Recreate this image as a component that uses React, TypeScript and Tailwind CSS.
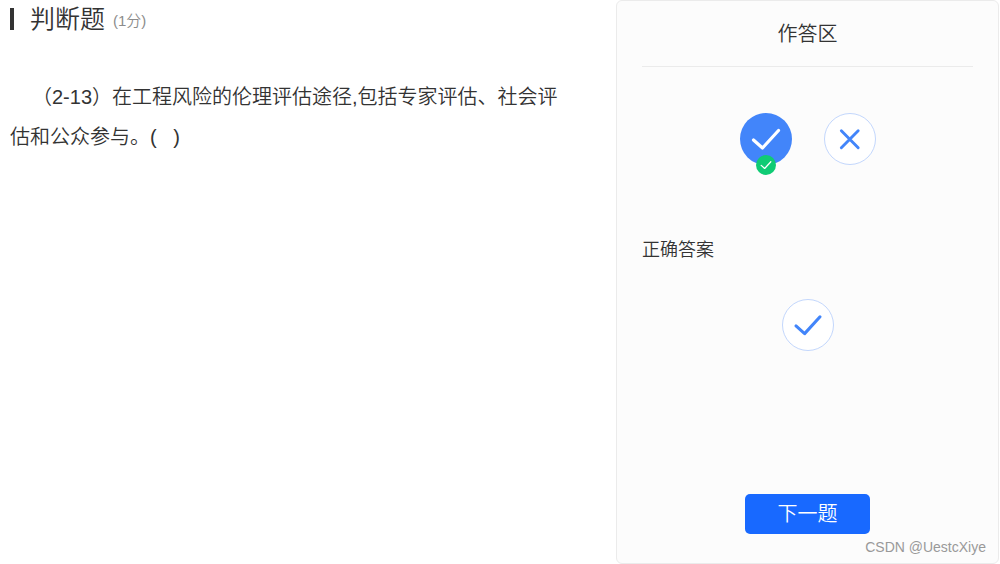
import { useState } from 'react'

const fontStack = "font-['Liberation_Sans','Noto_Sans_CJK_SC',sans-serif]"

function CheckMark({ className }: { className?: string }) {
  return (
    <svg viewBox="0 0 52 52" fill="none" stroke="currentColor" className={className} aria-hidden="true">
      <path d="M13.5 27 L22.5 35 L38.5 17.5" strokeWidth="3.2" strokeLinecap="round" strokeLinejoin="round" />
    </svg>
  )
}

function CrossMark({ className }: { className?: string }) {
  return (
    <svg viewBox="0 0 52 52" fill="none" stroke="currentColor" className={className} aria-hidden="true">
      <path d="M17 17.5 L34.5 35 M34.5 17.5 L17 35" strokeWidth="3" strokeLinecap="round" />
    </svg>
  )
}

const options = [
  { value: 'true', label: '正确', Icon: CheckMark },
  { value: 'false', label: '错误', Icon: CrossMark },
]

const correctAnswer = 'true'

function Question() {
  return (
    <main className="min-w-0 pl-2.5 pr-12 pt-[3px]">
      <h1 className="flex h-8 items-center">
        <span className="mr-4 h-[22px] w-1 bg-[#333333]" />
        <span className="text-[25px] leading-8">判断题</span>
        <span className="ml-2 pt-1 text-[15px] leading-6 text-[#8c8c8c]">(1分)</span>
      </h1>
      <p className="mt-[42px] indent-[22px] text-xl leading-10">
        （2-13）在工程风险的伦理评估途径,包括专家评估、社会评估和公众参与。(&nbsp;&nbsp;&nbsp;)
      </p>
    </main>
  )
}

function AnswerPanel() {
  const [answer, setAnswer] = useState('true')

  return (
    <aside className="relative flex flex-col rounded-md border border-[#ebebeb] bg-[#fcfcfc] px-[25px] pb-[29px]">
      <h2 id="answer-title" className="h-[66px] border-b border-[#ebebeb] text-center text-xl leading-[66px]">
        作答区
      </h2>

      {/* True / false choice */}
      <fieldset aria-labelledby="answer-title" className="mt-[46px] flex justify-center gap-8">
        {options.map(({ value, label, Icon }) => {
          const selected = answer === value
          return (
            <label
              key={value}
              className={`relative size-[52px] cursor-pointer rounded-full ${
                selected ? 'bg-[#4285fa] text-white' : 'border border-[#c3d7fc] bg-white text-[#4285fa]'
              }`}
            >
              <input
                type="radio"
                name="answer"
                value={value}
                checked={selected}
                onChange={() => setAnswer(value)}
                aria-label={label}
                className="absolute inset-0 size-full cursor-pointer opacity-0"
              />
              <Icon className="size-full" />
              {selected && value === correctAnswer && (
                <span className="absolute -bottom-2.5 left-4 size-5 rounded-full bg-[#0fcb74] text-white">
                  <CheckMark className="size-full" />
                </span>
              )}
            </label>
          )
        })}
      </fieldset>

      <h3 className="mt-[71px] text-lg leading-7">正确答案</h3>
      <div className="mx-auto mt-[35px] size-[52px] rounded-full border border-[#c3d7fc] bg-white text-[#4285fa]">
        <CheckMark className="size-full" />
      </div>

      <button type="button" className="mx-auto mt-auto h-10 w-[125px] rounded-[5px] bg-[#1869ff] text-xl text-white">
        下一题
      </button>

      <span className="absolute bottom-1.5 right-3 text-sm text-[#999999]">CSDN @UestcXiye</span>
    </aside>
  )
}

export default function App() {
  return (
    <div className={`grid min-h-screen grid-cols-[minmax(0,1fr)_383px] bg-white pr-px font-[350] text-[#333333] ${fontStack}`}>
      <Question />
      <AnswerPanel />
    </div>
  )
}
